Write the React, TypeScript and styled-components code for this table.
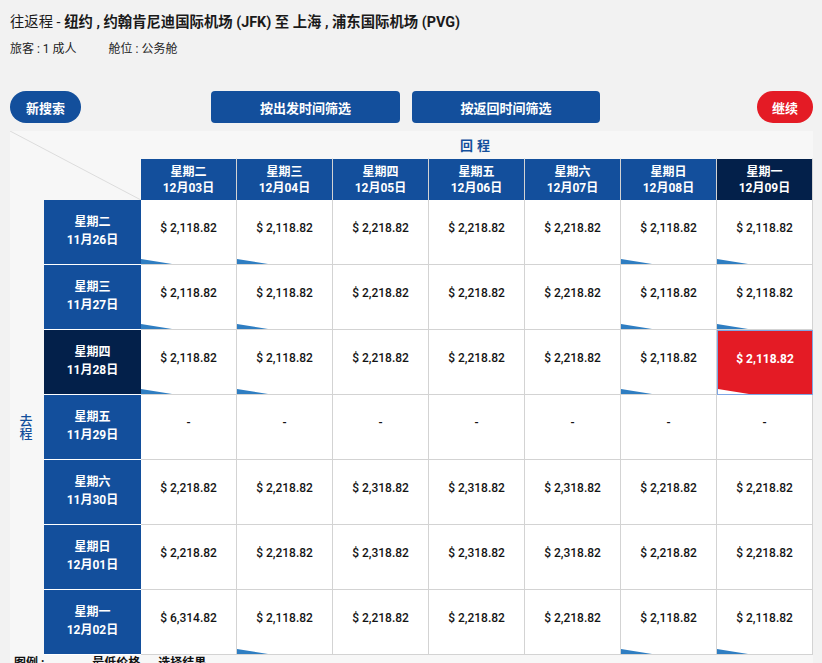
import React from "react";
import styled, { createGlobalStyle, css } from "styled-components";

const BLUE = "#134f9c";
const NAVY = "#03204a";
const RED = "#e41b25";
const GRID = "#d3d3d3";

const GlobalStyle = createGlobalStyle`
  html, body {
    margin: 0;
    padding: 0;
    background: #f2f2f2;
    font-family: Roboto, "Noto Sans CJK SC", sans-serif;
    color: #111;
  }
`;

const Page = styled.div`
  padding: 13px 10px 0 10px;
  width: 803px;
  height: 663px;
  overflow: hidden;
`;

const Title = styled.div`
  font-size: 14.35px;
  line-height: 20px;
  font-weight: 700;
  color: #1a1a1a;
  white-space: nowrap;
`;

const TitleLead = styled.span`
  font-weight: 400;
`;

const SubLine = styled.div`
  display: flex;
  gap: 32px;
  margin-top: 8px;
  font-size: 12px;
  line-height: 16px;
  color: #222;
`;

const Toolbar = styled.div`
  display: flex;
  align-items: center;
  margin-top: 34px;
`;

const Button = styled.button<{ $variant: "pill" | "rect" | "red"; $w: number; $ml?: string }>`
  height: 32px;
  width: ${(p) => p.$w}px;
  margin-left: ${(p) => p.$ml ?? "0"};
  border: none;
  color: #fff;
  font-family: inherit;
  font-size: 13px;
  font-weight: 700;
  cursor: pointer;
  background: ${(p) => (p.$variant === "red" ? RED : BLUE)};
  border-radius: ${(p) => (p.$variant === "rect" ? "4px" : "16px")};
`;

const Panel = styled.div`
  margin-top: 8px;
  background: #f7f7f7;
  display: grid;
  grid-template-columns: 34px 97px repeat(7, 96px);
  grid-template-rows: 27px 42px repeat(7, 65px) auto;
`;

const Corner = styled.div`
  grid-column: 1 / 3;
  grid-row: 1 / 3;
  position: relative;
`;

const CornerLine = styled.svg`
  position: absolute;
  inset: 0;
  width: 100%;
  height: 100%;
`;

const ReturnLabel = styled.div`
  grid-column: 3 / -1;
  grid-row: 1;
  display: flex;
  align-items: center;
  justify-content: center;
  font-size: 13px;
  font-weight: 700;
  color: ${BLUE};
  letter-spacing: 4px;
`;

const OutLabel = styled.div`
  grid-column: 1;
  grid-row: 3 / 10;
  display: flex;
  align-items: center;
  justify-content: center;
  font-size: 13px;
  font-weight: 500;
  color: ${BLUE};
  line-height: 17px;
  writing-mode: vertical-rl;
  padding-right: 4px;
  padding-bottom: 2px;
`;

const ColHead = styled.div<{ $active: boolean }>`
  display: flex;
  flex-direction: column;
  align-items: center;
  justify-content: center;
  background: ${(p) => (p.$active ? NAVY : BLUE)};
  color: #fff;
  font-size: 12px;
  font-weight: 700;
  line-height: 16px;
  border-right: 1px solid ${GRID};
  border-top: 1px solid #f7f7f7;
  box-sizing: border-box;
`;

const RowHead = styled.div<{ $active: boolean }>`
  grid-column: 2;
  display: flex;
  flex-direction: column;
  align-items: center;
  justify-content: center;
  background: ${(p) => (p.$active ? NAVY : BLUE)};
  color: #fff;
  font-size: 12px;
  font-weight: 700;
  line-height: 18px;
  border-bottom: 1px solid #fff;
  box-sizing: border-box;
  padding-bottom: 2px;
`;

const Cell = styled.div<{ $selected: boolean; $mark: boolean }>`
  position: relative;
  display: flex;
  align-items: center;
  justify-content: center;
  box-sizing: border-box;
  background: #fff;
  border-right: 1px solid ${GRID};
  border-bottom: 1px solid ${GRID};
  font-size: 12px;
  font-weight: 500;
  color: #141414;
  padding-bottom: 8px;
  ${(p) =>
    p.$selected &&
    css`
      background: ${RED};
      color: #fff;
      font-weight: 700;
      border: 1px solid #7fa6e3;
    `}
  ${(p) =>
    p.$mark &&
    css`
      &::after {
        content: "";
        position: absolute;
        left: 0;
        bottom: 0;
        width: 31px;
        height: 5px;
        background: ${p.$selected ? "#fff" : "#2f7ec2"};
        clip-path: polygon(0 0, 100% 100%, 0 100%);
      }
    `}
`;

const Legend = styled.div`
  grid-column: 1 / -1;
  font-size: 12px;
  font-weight: 700;
  line-height: 16px;
  padding: 0 4px;
  color: #111;
`;

const cols = [
  ["星期二", "12月03日"],
  ["星期三", "12月04日"],
  ["星期四", "12月05日"],
  ["星期五", "12月06日"],
  ["星期六", "12月07日"],
  ["星期日", "12月08日"],
  ["星期一", "12月09日"],
];

type Row = { day: string; date: string; prices: string[]; marks: number[] };

const A = "2,118.82";
const B = "2,218.82";
const C = "2,318.82";

const rows: Row[] = [
  { day: "星期二", date: "11月26日", prices: [A, A, B, B, B, A, A], marks: [0, 1, 5, 6] },
  { day: "星期三", date: "11月27日", prices: [A, A, B, B, B, A, A], marks: [0, 1, 5, 6] },
  { day: "星期四", date: "11月28日", prices: [A, A, B, B, B, A, A], marks: [0, 1, 5, 6] },
  { day: "星期五", date: "11月29日", prices: ["", "", "", "", "", "", ""], marks: [] },
  { day: "星期六", date: "11月30日", prices: [B, B, C, C, C, B, B], marks: [] },
  { day: "星期日", date: "12月01日", prices: [B, B, C, C, C, B, B], marks: [] },
  { day: "星期一", date: "12月02日", prices: ["6,314.82", A, B, B, B, A, A], marks: [1, 5, 6] },
];

const SEL_ROW = 2;
const SEL_COL = 6;

export default function App() {
  return (
    <Page>
      <GlobalStyle />
      <Title>
        <TitleLead>往返程 - </TitleLead>纽约 , 约翰肯尼迪国际机场 (JFK) 至 上海 , 浦东国际机场 (PVG)
      </Title>
      <SubLine>
        <span>旅客 : 1 成人</span>
        <span>舱位 : 公务舱</span>
      </SubLine>
      <Toolbar>
        <Button $variant="pill" $w={71}>新搜索</Button>
        <Button $variant="rect" $w={189} $ml="130px">按出发时间筛选</Button>
        <Button $variant="rect" $w={188} $ml="12px">按返回时间筛选</Button>
        <Button $variant="red" $w={56} $ml="auto">继续</Button>
      </Toolbar>
      <Panel>
        <Corner>
          <CornerLine viewBox="0 0 131 69" preserveAspectRatio="none">
            <line x1="0" y1="0" x2="131" y2="69" stroke="#dcdcdc" strokeWidth="1" />
          </CornerLine>
        </Corner>
        <ReturnLabel>回程</ReturnLabel>
        {cols.map(([d, dt], i) => (
          <ColHead key={dt} $active={i === SEL_COL} style={{ gridRow: 2, gridColumn: i + 3 }}>
            <span>{d}</span>
            <span>{dt}</span>
          </ColHead>
        ))}
        <OutLabel>去程</OutLabel>
        {rows.map((r, ri) => (
          <React.Fragment key={r.date}>
            <RowHead $active={ri === SEL_ROW} style={{ gridRow: ri + 3 }}>
              <span>{r.day}</span>
              <span>{r.date}</span>
            </RowHead>
            {r.prices.map((p, ci) => (
              <Cell
                key={ci}
                $selected={ri === SEL_ROW && ci === SEL_COL}
                $mark={r.marks.includes(ci)}
              >
                {p ? `$ ${p}` : "-"}
              </Cell>
            ))}
          </React.Fragment>
        ))}
        <Legend>图例 :　　　　最低价格 ,　选择结果</Legend>
      </Panel>
    </Page>
  );
}
